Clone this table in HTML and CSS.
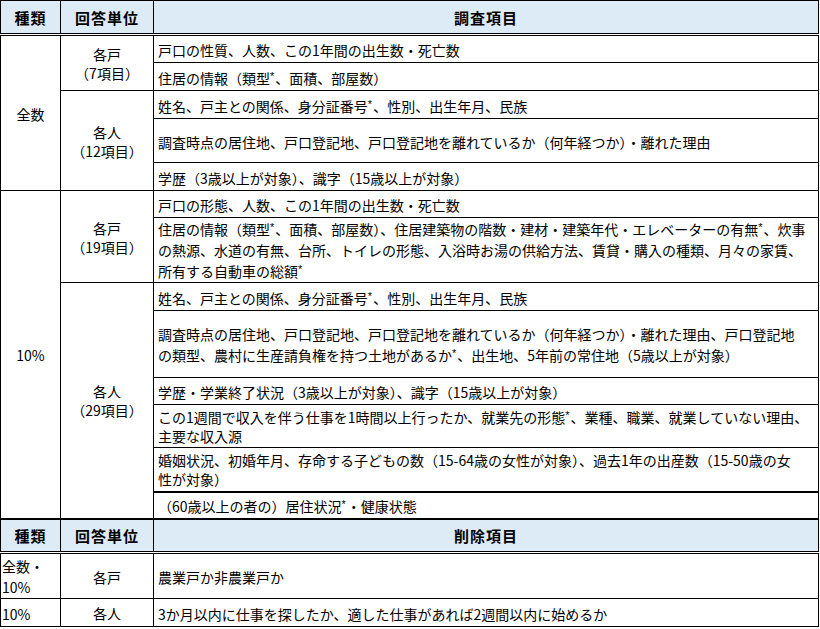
FILE: index.html
```html
<!DOCTYPE html>
<html lang="ja">
<head>
<meta charset="utf-8">
<title>調査項目</title>
<link rel="stylesheet" href="styles.css">
</head>
<body>
<table class="survey">
  <colgroup><col class="c1"><col class="c2"><col class="c3"></colgroup>
  <tr class="hd h35">
    <th>種類</th><th>回答単位</th><th>調査項目</th>
  </tr>
  <tr class="h28">
    <td rowspan="5" class="kind">全数</td>
    <td rowspan="2" class="unit">各戸<br>（7項目）</td>
    <td class="item">戸口の性質、人数、この1年間の出生数・死亡数</td>
  </tr>
  <tr class="h28">
    <td class="item">住居の情報（類型<sup>*</sup>、面積、部屋数）</td>
  </tr>
  <tr class="h28">
    <td rowspan="3" class="unit">各人<br>（12項目）</td>
    <td class="item">姓名、戸主との関係、身分証番号<sup>*</sup>、性別、出生年月、民族</td>
  </tr>
  <tr class="h44">
    <td class="item">調査時点の居住地、戸口登記地、戸口登記地を離れているか（何年経つか）・離れた理由</td>
  </tr>
  <tr class="h28">
    <td class="item">学歴（3歳以上が対象）、識字（15歳以上が対象）</td>
  </tr>
  <tr class="h27">
    <td rowspan="8" class="kind">10%</td>
    <td rowspan="2" class="unit">各戸<br>（19項目）</td>
    <td class="item">戸口の形態、人数、この1年間の出生数・死亡数</td>
  </tr>
  <tr class="h65">
    <td class="item multi">住居の情報（類型<sup>*</sup>、面積、部屋数）、住居建築物の階数・建材・建築年代・エレベーターの有無<sup>*</sup>、炊事<br>の熱源、水道の有無、台所、トイレの形態、入浴時お湯の供給方法、賃貸・購入の種類、月々の家賃、<br>所有する自動車の総額<sup>*</sup></td>
  </tr>
  <tr class="h28">
    <td rowspan="6" class="unit">各人<br>（29項目）</td>
    <td class="item">姓名、戸主との関係、身分証番号<sup>*</sup>、性別、出生年月、民族</td>
  </tr>
  <tr class="h67">
    <td class="item multi">調査時点の居住地、戸口登記地、戸口登記地を離れているか（何年経つか）・離れた理由、戸口登記地<br>の類型、農村に生産請負権を持つ土地があるか<sup>*</sup>、出生地、5年前の常住地（5歳以上が対象）</td>
  </tr>
  <tr class="h27">
    <td class="item">学歴・学業終了状況（3歳以上が対象）、識字（15歳以上が対象）</td>
  </tr>
  <tr class="h43">
    <td class="item tight">この1週間で収入を伴う仕事を1時間以上行ったか、就業先の形態<sup>*</sup>、業種、職業、就業していない理由、<br>主要な収入源</td>
  </tr>
  <tr class="h44">
    <td class="item tight">婚姻状況、初婚年月、存命する子どもの数（15-64歳の女性が対象）、過去1年の出産数（15-50歳の女<br>性が対象）</td>
  </tr>
  <tr class="h27 thick-top">
    <td class="item">（60歳以上の者の）居住状況<sup>*</sup>・健康状態</td>
  </tr>
  <tr class="hd h35 thick-top">
    <th>種類</th><th>回答単位</th><th>削除項目</th>
  </tr>
  <tr class="h46">
    <td class="left two">全数・<br>10%</td>
    <td class="unit">各戸</td>
    <td class="item">農業戸か非農業戸か</td>
  </tr>
  <tr class="h28">
    <td class="left">10%</td>
    <td class="unit">各人</td>
    <td class="item">3か月以内に仕事を探したか、適した仕事があれば2週間以内に始めるか</td>
  </tr>
</table>
</body>
</html>
```

FILE: styles.css
```css
html, body {
  margin: 0;
  padding: 0;
  background: #fff;
}

body {
  font-family: "Noto Sans CJK JP", "Noto Sans", sans-serif;
  font-size: 14px;
  color: #000;
}

.survey {
  border-collapse: collapse;
  table-layout: fixed;
  width: 819px;
}

.c1 { width: 60px; }
.c2 { width: 93px; }
.c3 { width: 665px; }

.survey th,
.survey td {
  border: 1px solid #000;
  padding: 2px 3px 0;
  vertical-align: middle;
  line-height: 20px;
  white-space: nowrap;
  overflow: hidden;
}

.survey th {
  background: #ddebf7;
  font-weight: bold;
  font-size: 15px;
  text-align: center;
  border-bottom: 3px double #000;
  letter-spacing: 1px;
}

.survey .kind,
.survey .unit {
  text-align: center;
}

.survey .unit {
  line-height: 19px;
}

.survey .item {
  text-align: left;
  padding-left: 4px;
}

.survey .multi {
  line-height: 21px;
  padding-top: 1px;
}

.survey .tight { line-height: 19px; }

.survey .left {
  text-align: left;
  padding-left: 1px;
}

.survey .two {
  line-height: 21px;
  padding-top: 1px;
}

.survey .thick-top td,
.survey .thick-top th {
  border-top-width: 2px;
}

sup {
  font-family: "Liberation Sans", sans-serif;
  font-size: 11px;
  line-height: 0;
  vertical-align: 4px;
  margin: 0 1px 0 0;
}

.h27 { height: 27px; }
.h28 { height: 28px; }
.h35 { height: 34px; }
.h43 { height: 43px; }
.h44 { height: 44px; }
.h46 { height: 46px; }
.h65 { height: 65px; }
.h67 { height: 67px; }
```
